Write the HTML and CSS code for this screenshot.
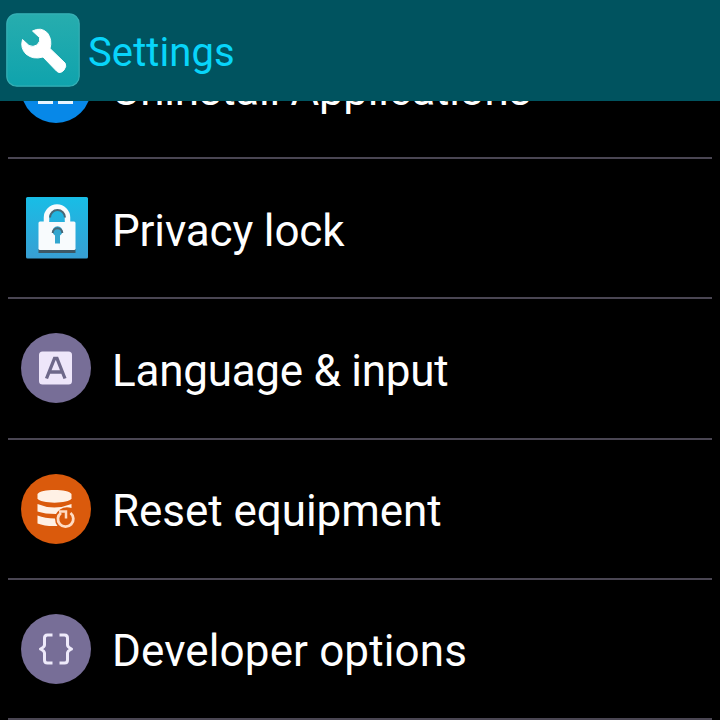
FILE: index.html
```html
<!DOCTYPE html>
<html lang="en">
<head>
<meta charset="utf-8">
<title>Settings</title>
<link rel="stylesheet" href="styles.css">
</head>
<body>
<header class="header">
  <svg class="app-icon" viewBox="0 0 74 74">
    <defs><linearGradient id="tile" x1="0" y1="0" x2="0" y2="1"><stop offset="0" stop-color="#27adae"/><stop offset="1" stop-color="#0fa3ad"/></linearGradient></defs>
    <rect x=".8" y=".8" width="72.4" height="72.4" rx="10" fill="url(#tile)" stroke="#36b0b5" stroke-width="1.2"/>
    <path d="M26.500 18Q35 13.500 41.500 20Q46.500 27 44 35.500L59 50Q61 53 58 57Q54 61.500 50.500 58L37 44Q27 47 20 41Q14 35 16.500 26.500L23 32.500Q27 34.500 31 32Q35 28 33.500 24.500Z" fill="#fff" stroke="#fff" stroke-linejoin="round"/>
  </svg>
  <h1 class="title">Settings</h1>
</header>
<main class="list">
  <div class="row row-first">
    <svg class="icon" viewBox="0 0 72 72"><circle cx="36" cy="36" r="35" fill="#0788e8"/><path d="M18 19h15v15H18zM38 19h15v15H38zM18 37h15v15H18zM38 37h15v15H38z" fill="#e8f4ff"/></svg>
    <span class="label label-uninstall">Uninstall Applications</span>
  </div>
  <div class="row">
    <svg class="icon" viewBox="0 0 72 72">
      <defs><linearGradient id="lock" x1="0" y1="0" x2="0" y2="1"><stop offset="0" stop-color="#18bde6"/><stop offset="1" stop-color="#389fd3"/></linearGradient></defs>
      <rect x="6" y="5" width="62" height="61.500" rx="1.500" fill="url(#lock)"/>
      <path d="M18.500 57h37v4h-37z" fill="#3d5865"/>
      <path d="M26.500 32v-6.500a10.500 10.500 0 0 1 21 0v6.500" fill="none" stroke="#f8fbfd" stroke-width="5.500"/>
      <path d="M30 25.500a7.500 7.500 0 0 1 15 0" fill="none" stroke="#486776" stroke-width="2"/>
      <rect x="18.500" y="29.500" width="37" height="28.500" rx="1.500" fill="#f8fbfd"/>
      <path d="M29.300 29h15.400v1h-15.400z" fill="#28b0dc"/>
      <path d="M35 51.500v-8a5 5 0 1 1 5 0v8z" fill="#32a6cf"/>
      <path d="M32.700 41a4.800 4.800 0 1 1 9.600 0" fill="none" stroke="#486776" stroke-width="2"/>
    </svg>
    <span class="label label-lock">Privacy lock</span>
  </div>
  <div class="row">
    <svg class="icon" viewBox="0 0 72 72"><circle cx="36" cy="36" r="35" fill="#776e97"/><rect x="19" y="19.500" width="33" height="33" rx="3.500" fill="#eee6fa"/><path d="M26.500 46.500L34.500 26.500H37L45 46.500M29.500 40H42" fill="none" stroke="#6e688a" stroke-width="3.300"/></svg>
    <span class="label label-language">Language &amp; input</span>
  </div>
  <div class="row">
    <svg class="icon" viewBox="0 0 72 72"><circle cx="36" cy="36" r="35" fill="#da5a0c"/>
      <path d="M17.500 21C20 15.500 49 15.500 51.500 21V25.500C49 31 20 31 17.500 25.500Z" fill="#fff1e5"/>
      <path d="M17.500 31Q34 38 51.500 31V35Q45 33 40 36.500Q37.500 38.500 36 41Q25 41 17.500 38.500ZM17.500 42.500Q25 45.500 35 45.500Q35 50 37.500 53Q25 53.500 17.500 50.500Z" fill="#fff1e5"/>
      <path d="M41 39.800A7.700 7.700 0 1 0 50.500 40" fill="none" stroke="#ffdcc4" stroke-width="2.800"/>
      <path d="M39 38.500h7v7" fill="none" stroke="#ffdcc4" stroke-width="2.500"/>
    </svg>
    <span class="label label-reset">Reset equipment</span>
  </div>
  <div class="row">
    <svg class="icon" viewBox="0 0 72 72"><circle cx="36" cy="36" r="35" fill="#776e97"/><path d="M32.500 22h-5q-3 0-3 3v7q0 2-4 4q4 2 4 4v7q0 3 3 3h5M39.500 22h5q3 0 3 3v7q0 2 4 4q-4 2-4 4v7q0 3-3 3h-5" fill="none" stroke="#eeeafa" stroke-width="3" stroke-linejoin="round"/></svg>
    <span class="label label-developer">Developer options</span>
  </div>
</main>
</body>
</html>
```
FILE: styles.css
```css
* { box-sizing: border-box; }
body {
  margin: 0;
  height: 720px;
  overflow: hidden;
  background: #000;
  color: #fff;
  font-family: Roboto, "Liberation Sans", sans-serif;
}
.header {
  display: flex;
  align-items: center;
  gap: 8px;
  height: 101px;
  padding: 0 6px 2px;
  background: #00535f;
}
.app-icon { width: 74px; height: 74px; flex: none; }
.title {
  margin: 6px 0 0;
  color: #08d5fa;
  font-size: 40px;
  font-weight: 400;
  line-height: 48px;
  letter-spacing: 0.1px;
}
.list {
  height: 619px;
  padding: 0 8px;
  overflow: hidden;
}
.row {
  display: flex;
  align-items: center;
  gap: 20px;
  height: 140.25px;
  padding-left: 12px;
  border-bottom: 2px solid #4a4653;
}
.row-first { margin-top: -82.25px; }
.icon { width: 72px; height: 72px; flex: none; }
.label {
  padding-top: 5px;
  font-size: 44px;
  line-height: 52px;
  white-space: nowrap;
}
.label-uninstall { letter-spacing: -0.27px; }
.label-lock { letter-spacing: -0.15px; }
.label-language { letter-spacing: -0.25px; }
.label-reset { letter-spacing: -0.05px; }
.label-developer { letter-spacing: 0.12px; }
```
